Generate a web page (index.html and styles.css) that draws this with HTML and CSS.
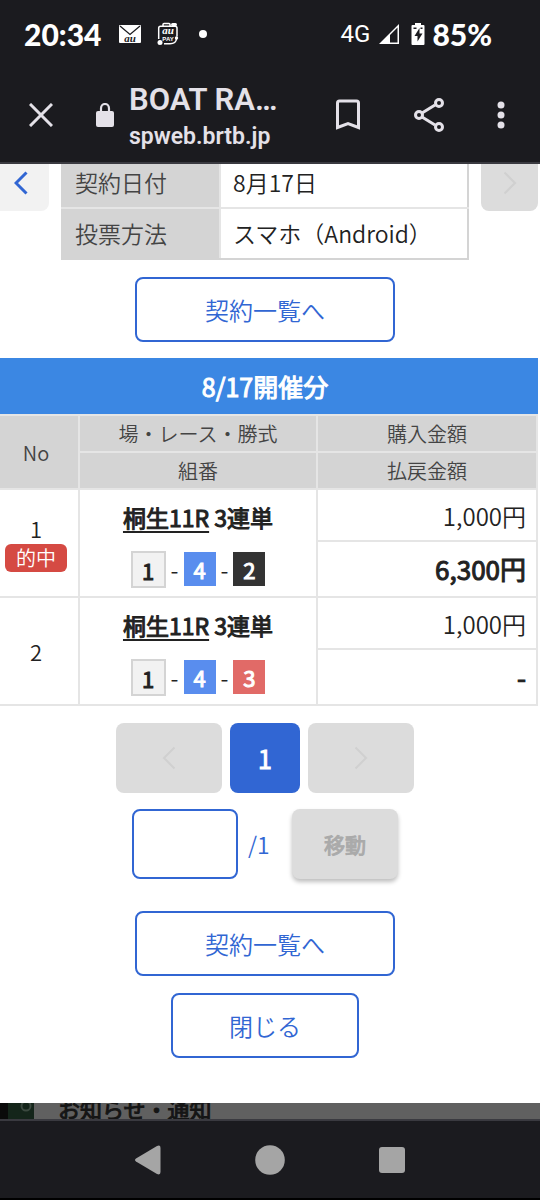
FILE: index.html
```html
<!DOCTYPE html>
<html lang="ja">
<head>
  <meta charset="utf-8">
  <meta name="viewport" content="width=device-width, initial-scale=1">
  <title>BOAT RACE</title>
  <link rel="stylesheet" href="styles.css">
</head>
<body>
  <!-- status bar -->
  <div class="status">
    <span class="clock">20:34</span>
    <svg class="ico-mail" width="22" height="18" viewBox="0 0 22 18">
      <rect width="22" height="18" rx="1" fill="#fff"/>
      <path d="M1 1l10 8.500L21 1" fill="none" stroke="#1b1b1f" stroke-width="1.300"/>
      <text x="11" y="16.500" text-anchor="middle" class="au">au</text>
    </svg>
    <svg class="ico-pay" width="22" height="24" viewBox="0 0 22 24" fill="none" stroke="#fff" stroke-width="1.500">
      <path d="M6 4V2.500Q6 1.500 7 1.500h5q1 0 1 1V4"/>
      <path d="M1.700 17V6q0-1.800 1.800-1.800H18q2 0 2 1.800v8.500"/>
      <path d="M7 21.800h6q6 0 6.500-5"/>
      <path d="M15.500 2.500h3" stroke-width="3" stroke-linecap="round"/>
      <circle cx="3" cy="20.500" r="2.500" fill="#fff" stroke="none"/>
      <circle cx="19.500" cy="16" r="1.700" fill="#fff" stroke="none"/>
      <text x="11" y="12" text-anchor="middle" class="au au-light">au</text>
      <text x="11" y="19" text-anchor="middle" class="pay">PAY</text>
    </svg>
    <span class="dot"></span>
    <span class="network">4G</span>
    <svg class="ico-signal" width="22" height="22" viewBox="0 0 22 22">
      <path d="M21 1v20H1z" fill="#fff"/>
      <path d="M19.500 4.500v15h-7.500v-7.500z" fill="#1b1b1f"/>
    </svg>
    <svg class="ico-battery" width="14" height="22" viewBox="0 0 14 22">
      <path d="M4 2V0h6v2h2.500q1 0 1 1v18q0 1-1 1h-11q-1 0-1-1V3q0-1 1-1z" fill="#fff"/>
      <path d="M8.500 5L3.500 13h3v5.500l5-8h-3zM2.500 4.500h3v1.500h-3zM9.500 4.500h2v1.500h-2z" fill="#1b1b1f"/>
    </svg>
    <span class="charge">85%</span>
  </div>

  <!-- browser bar -->
  <header class="toolbar">
    <button class="tool" aria-label="閉じる">
      <svg width="24" height="24" viewBox="0 0 24 24"><path d="M1 1l22 22M23 1L1 23" stroke="#e4e1e8" stroke-width="3"/></svg>
    </button>
    <span class="lock">
      <svg width="18" height="24" viewBox="0 0 18 24">
        <path d="M5 9V5.500a4 4.500 0 0 1 8 0V9" fill="none" stroke="#e4e1e8" stroke-width="2.200"/>
        <rect y="8" width="18" height="16" rx="2" fill="#e4e1e8"/>
      </svg>
    </span>
    <div class="site">
      <div class="site-title">BOAT RA…</div>
      <div class="site-url">spweb.brtb.jp</div>
    </div>
    <button class="tool" aria-label="ブックマーク">
      <svg width="24" height="32" viewBox="0 0 24 32"><path d="M1.500 28.500V4q0-2 2-2h17q2 0 2 2v24.500L12 24.500z" fill="none" stroke="#e4e1e8" stroke-width="3"/></svg>
    </button>
    <button class="tool" aria-label="共有">
      <svg width="32" height="36" viewBox="0 0 32 36" fill="none" stroke="#e4e1e8" stroke-width="3">
        <path d="M9 16L22 8M9 20l13 8"/>
        <circle cx="6" cy="18" r="3.500"/><circle cx="26" cy="6" r="3.500"/><circle cx="26" cy="30" r="3.500"/>
      </svg>
    </button>
    <button class="tool tool-menu" aria-label="メニュー">
      <svg width="8" height="28" viewBox="0 0 8 28" fill="#e4e1e8"><circle cx="4" cy="4" r="3.500"/><circle cx="4" cy="14" r="3.500"/><circle cx="4" cy="24" r="3.500"/></svg>
    </button>
  </header>

  <!-- page -->
  <div class="viewport">
    <main class="page">
      <div class="contract">
        <button class="turn turn-prev" aria-label="前へ">
          <svg width="14" height="24" viewBox="0 0 14 24"><path d="M12.500 1.500L2 12l10.500 10.500"/></svg>
        </button>
        <table class="info">
          <tr><th>契約日付</th><td>8月17日</td></tr>
          <tr><th>投票方法</th><td>スマホ（Android）</td></tr>
        </table>
        <button class="turn turn-next" aria-label="次へ" disabled>
          <svg width="14" height="24" viewBox="0 0 14 24"><path d="M1.500 1.500L12 12 1.500 22.500"/></svg>
        </button>
      </div>

      <a class="btn" href="#list">契約一覧へ</a>

      <table class="bets">
        <caption class="strong">8/17開催分</caption>
        <colgroup><col class="col-no"><col><col class="col-money"></colgroup>
        <thead>
          <tr><th rowspan="2">No</th><th>場・レース・勝式</th><th>購入金額</th></tr>
          <tr><th>組番</th><th>払戻金額</th></tr>
        </thead>
        <tbody>
          <tr>
            <td class="no" rowspan="2">1<span class="hit">的中</span></td>
            <td class="bet" rowspan="2">
              <div class="race strong"><a href="#race">桐生11R</a> 3連単</div>
              <div class="combo"><b class="boat boat1">1</b>-<b class="boat boat4">4</b>-<b class="boat boat2">2</b></div>
            </td>
            <td class="money">1,000円</td>
          </tr>
          <tr><td class="money pay-back strong">6,300円</td></tr>
          <tr>
            <td class="no" rowspan="2">2</td>
            <td class="bet" rowspan="2">
              <div class="race strong"><a href="#race">桐生11R</a> 3連単</div>
              <div class="combo"><b class="boat boat1">1</b>-<b class="boat boat4">4</b>-<b class="boat boat3">3</b></div>
            </td>
            <td class="money">1,000円</td>
          </tr>
          <tr><td class="money pay-back strong">-</td></tr>
        </tbody>
      </table>

      <div class="pager">
        <button class="pg" aria-label="前のページ" disabled>
          <svg width="14" height="24" viewBox="0 0 14 24"><path d="M12.500 1.500L2 12l10.500 10.500"/></svg>
        </button>
        <button class="pg pg-current strong">1</button>
        <button class="pg" aria-label="次のページ" disabled>
          <svg width="14" height="24" viewBox="0 0 14 24"><path d="M1.500 1.500L12 12 1.500 22.500"/></svg>
        </button>
      </div>

      <form class="jump">
        <input type="text" id="page-no" aria-label="ページ番号">
        <label for="page-no">/1</label>
        <button type="button" class="strong" disabled>移動</button>
      </form>

      <a class="btn" href="#list">契約一覧へ</a>
      <button class="btn btn-close">閉じる</button>
    </main>
  </div>

  <!-- page behind the dialog -->
  <div class="behind">
    <span class="behind-black"></span>
    <span class="behind-green"><svg width="12" height="12" viewBox="0 0 12 12"><circle cx="6" cy="3" r="4.500" fill="none" stroke="#3c4a40" stroke-width="2"/></svg></span>
    <span class="behind-text strong">お知らせ・通知</span>
  </div>

  <!-- system navigation -->
  <nav class="sysnav">
    <button aria-label="戻る"><svg width="30" height="30" viewBox="0 0 30 30"><path d="M3 13.500L24 1q3.500-1.500 3.500 2v24q0 3.500-3.500 2L3 16.500q-2-1.500 0-3z"/></svg></button>
    <button aria-label="ホーム"><svg width="30" height="30" viewBox="0 0 30 30"><circle cx="15" cy="15" r="14.800"/></svg></button>
    <button aria-label="履歴"><svg width="26" height="26" viewBox="0 0 26 26"><rect width="26" height="26" rx="3"/></svg></button>
  </nav>
</body>
</html>
```
FILE: styles.css
```css
* {
  box-sizing: border-box;
}
body {
  display: flex;
  flex-direction: column;
  min-height: 100vh;
  margin: 0;
  background: #1b1b1f;
  color: #222;
  font-family: "Noto Sans CJK JP", sans-serif;
  font-weight: 350;
  font-size: 23px;
}
button,
input {
  font-family: inherit;
  font-weight: inherit;
  margin: 0;
}
button {
  display: flex;
  align-items: center;
  justify-content: center;
  padding: 0;
  border: 0;
  background: none;
  cursor: pointer;
}
svg {
  display: block;
  flex: none;
}
.strong,
.boat {
  font-weight: 400;
  -webkit-text-stroke: 1px;
}

/* status bar */
.status {
  display: flex;
  align-items: center;
  height: 68px;
  padding: 0 48px 0 24px;
  color: #fff;
}
.clock,
.charge {
  font-family: Lato, sans-serif;
  font-weight: 900;
  font-size: 30px;
}
.ico-mail {
  margin-left: 18px;
}
.ico-pay {
  margin-left: 16px;
}
.au {
  fill: #1b1b1f;
  font: italic bold 11px "Liberation Serif", serif;
}
.au-light {
  fill: #fff;
  stroke: none;
}
.pay {
  fill: #fff;
  stroke: none;
  font: bold 6px "Liberation Sans", sans-serif;
}
.dot {
  width: 8px;
  height: 8px;
  margin-left: 20px;
  border-radius: 50%;
  background: #fff;
}
.network {
  margin-left: auto;
  font-family: Roboto, sans-serif;
  font-weight: 400;
  font-size: 24px;
}
.ico-signal {
  margin-left: 8px;
}
.ico-battery {
  margin: 0 7px 0 11px;
}

/* browser bar */
.toolbar {
  display: flex;
  align-items: center;
  height: 96px;
  padding-right: 7px;
  border-bottom: 2px solid #3a3a40;
  color: #e4e1e8;
  font-family: Roboto, sans-serif;
  font-weight: 600;
}
.tool {
  flex: none;
  width: 81px;
  height: 80px;
}
.tool-menu {
  width: 64px;
}
.lock {
  flex: none;
  display: flex;
  justify-content: center;
  width: 48px;
}
.site {
  flex: 1;
  min-width: 0;
  padding-top: 8px;
  white-space: nowrap;
}
.site-title {
  font-size: 31px;
  line-height: 36px;
}
.site-url {
  font-size: 23px;
  line-height: 38px;
}

/* page, scrolled a little to the right */
.viewport {
  flex: 1;
  overflow: hidden;
  background: #fff;
}
.page {
  display: flex;
  flex-direction: column;
  align-items: center;
  margin: 0 2px 0 -8px;
}
.contract {
  display: flex;
  align-items: flex-start;
  gap: 12px;
  width: 100%;
  margin-bottom: 17px;
}
.turn {
  flex: none;
  width: 57px;
  height: 47px;
  padding-bottom: 10px;
  border-radius: 0 0 8px 8px;
}
.turn path,
.pg path {
  fill: none;
  stroke: #d0d0d0;
  stroke-width: 2;
}
.turn-prev {
  background: #f2f2f2;
}
.turn-prev path {
  stroke: #3166d3;
  stroke-width: 3;
}
.turn-next {
  background: #dcdcdc;
}
.info {
  flex: 1;
  border-collapse: collapse;
  line-height: 37px;
}
.info th,
.info td {
  padding: 6px 14px;
  border-bottom: 2px solid #d4d4d4;
  text-align: left;
  font-weight: inherit;
}
.info th {
  width: 159px;
  background: #d4d4d4;
  color: #444;
  white-space: nowrap;
}
.info td {
  padding-left: 12px;
  border-right: 2px solid #d4d4d4;
  border-left: 2px solid #e5e5e5;
}
.info tr:first-child th,
.info tr:first-child td {
  padding-top: 0;
  border-bottom-color: #e5e5e5;
}
.btn {
  display: flex;
  align-items: center;
  justify-content: center;
  width: 260px;
  height: 65px;
  border: 2px solid #3166d3;
  border-radius: 8px;
  background: #fff;
  color: #3166d3;
  font-size: 24px;
  text-decoration: none;
}
.btn-close {
  width: 188px;
  margin: 17px 0 45px;
}

/* bets */
.bets {
  width: 100%;
  margin: 16px 0 17px;
  border-collapse: collapse;
  table-layout: fixed;
}
.bets caption {
  background: #3b87e3;
  color: #fff;
  font-size: 25px;
  line-height: 56px;
}
.col-no {
  width: 86px;
}
.col-money {
  width: 220px;
}
.bets th,
.bets td {
  padding: 0;
  border: 2px solid #e5e5e5;
  text-align: center;
}
.bets th {
  height: 37px;
  background: #d4d4d4;
  color: #444;
  font-size: 20px;
  font-weight: inherit;
  line-height: 35px;
}
.bets .no {
  font-size: 22px;
  line-height: 28px;
}
.hit {
  display: block;
  margin: 2px 11px 0;
  border-radius: 6px;
  background: #d54a43;
  color: #fff;
  font-size: 20px;
}
.bets .bet {
  padding-top: 2px;
}
.race {
  line-height: 32px;
}
.race a {
  color: inherit;
  text-underline-offset: 4px;
}
.combo {
  display: flex;
  align-items: center;
  justify-content: center;
  gap: 5px;
  margin-top: 18px;
  line-height: 34px;
}
.boat {
  width: 32px;
  height: 34px;
  color: #fff;
  font-size: 22px;
}
.boat1 {
  width: 35px;
  height: 37px;
  border: 2px solid #d4d4d4;
  background: #f2f2f2;
  color: #222;
}
.boat2 {
  background: #333;
}
.boat3 {
  background: #e16a67;
}
.boat4 {
  background: #598dee;
}
.bets .money {
  height: 52px;
  padding: 2px 10px 0 0;
  font-size: 24px;
  line-height: 36px;
  text-align: right;
}
.bets .pay-back {
  height: 56px;
  padding-top: 0;
  font-size: 26px;
}

/* paging */
.pager {
  display: flex;
  gap: 8px;
}
.pg {
  width: 106px;
  height: 70px;
  border-radius: 8px;
  background: #dcdcdc;
}
.pg-current {
  width: 70px;
  background: #3166d3;
  color: #fff;
  font-size: 25px;
}
.jump {
  display: flex;
  align-items: center;
  margin: 16px 0 32px;
}
.jump input {
  width: 106px;
  height: 70px;
  padding: 0 12px;
  border: 2px solid #3166d3;
  border-radius: 8px;
  font-size: 24px;
}
.jump label {
  width: 54px;
  padding-left: 10px;
  color: #3166d3;
}
.jump button {
  width: 106px;
  height: 70px;
  border-radius: 8px;
  background: #dcdcdc;
  box-shadow: 0 3px 4px rgba(0, 0, 0, .25);
  color: #aaa;
  font-size: 21px;
}

/* dimmed page behind */
.behind {
  display: flex;
  height: 18px;
  overflow: hidden;
  border-bottom: 2px solid #3a3a40;
  background: #606060;
}
.behind-black {
  width: 8px;
  background: #0a0a0a;
}
.behind-green {
  width: 26px;
  padding-left: 12px;
  background: #14251a;
}
.behind-text {
  margin-left: 24px;
  color: #151515;
  font-size: 22px;
  line-height: 10px;
}

/* system navigation */
.sysnav {
  display: flex;
  justify-content: center;
  height: 79px;
  border-bottom: 2px solid #000;
}
.sysnav button {
  width: 122px;
}
.sysnav svg {
  fill: #a5a5a5;
}
```
